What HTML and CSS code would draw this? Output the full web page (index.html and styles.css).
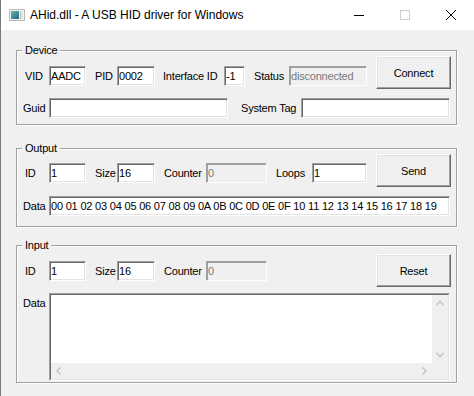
FILE: index.html
```html
<!DOCTYPE html>
<html lang="en">
<head>
    <meta charset="UTF-8">
    <title>AHid.dll - A USB HID driver for Windows</title>
    <link rel="stylesheet" href="styles.css">
</head>
<body>
    <div class="window">
        <div class="titlebar">
            <svg class="app-icon" width="16" height="12" viewBox="0 0 16 12">
                <defs>
                    <linearGradient id="scr" x1="0" y1="0" x2="1" y2="1">
                        <stop offset="0" stop-color="#6fb98f"/>
                        <stop offset="0.5" stop-color="#3f8f9a"/>
                        <stop offset="1" stop-color="#2c5f8f"/>
                    </linearGradient>
                </defs>
                <rect x="0.5" y="0.5" width="15" height="11" fill="#f4f4f4" stroke="#b8b8b8"/>
                <rect x="2" y="2" width="8" height="8" fill="url(#scr)"/>
                <rect x="11" y="2" width="3" height="8" fill="#e2e2e2"/>
                <rect x="11" y="2" width="1" height="8" fill="#c4c4c4"/>
            </svg>
            <span class="title">AHid.dll - A USB HID driver for Windows</span>
            <div class="caption-btns">
                <span class="cap-btn">
                    <svg width="10" height="10" viewBox="0 0 10 10"><path d="M0 5.5h10" stroke="#000" stroke-width="1"/></svg>
                </span>
                <span class="cap-btn">
                    <svg width="10" height="10" viewBox="0 0 10 10"><rect x="0.5" y="0.5" width="9" height="9" fill="none" stroke="#cccccc"/></svg>
                </span>
                <span class="cap-btn">
                    <svg width="10" height="10" viewBox="0 0 10 10"><path d="M0 0L10 10M10 0L0 10" stroke="#000" stroke-width="1"/></svg>
                </span>
            </div>
        </div>

        <div class="client">
            <!-- Device -->
            <div class="group group-device">
                <div class="group-title">Device</div>
                <div class="row row-top">
                    <label class="lbl lbl-first w-26">VID</label>
                    <input class="edit w-37" type="text" value="AADC">
                    <label class="lbl w-31">PID</label>
                    <input class="edit w-38" type="text" value="0002">
                    <label class="lbl lbl-8 w-69">Interface ID</label>
                    <input class="edit w-21" type="text" value="-1">
                    <label class="lbl w-44">Status</label>
                    <input class="edit w-78" type="text" value="disconnected" disabled>
                    <button class="btn">Connect</button>
                </div>
                <div class="row row-second">
                    <label class="lbl lbl-zero w-26">Guid</label>
                    <input class="edit w-179" type="text" value="">
                    <label class="lbl lbl-13 w-73">System Tag</label>
                    <input class="edit w-149" type="text" value="">
                </div>
            </div>

            <!-- Output -->
            <div class="group group-output">
                <div class="group-title">Output</div>
                <div class="row row-top">
                    <label class="lbl lbl-first w-26">ID</label>
                    <input class="edit w-37" type="text" value="1">
                    <label class="lbl w-31">Size</label>
                    <input class="edit w-38" type="text" value="16">
                    <label class="lbl w-51">Counter</label>
                    <input class="edit w-61" type="text" value="0" disabled>
                    <label class="lbl w-45">Loops</label>
                    <input class="edit w-55" type="text" value="1">
                    <button class="btn">Send</button>
                </div>
                <div class="row row-second">
                    <label class="lbl lbl-zero w-26">Data</label>
                    <input class="edit w-401" type="text" value="00 01 02 03 04 05 06 07 08 09 0A 0B 0C 0D 0E 0F 10 11 12 13 14 15 16 17 18 19">
                </div>
            </div>

            <!-- Input -->
            <div class="group group-input">
                <div class="group-title">Input</div>
                <div class="row row-top">
                    <label class="lbl lbl-first w-26">ID</label>
                    <input class="edit w-37" type="text" value="1">
                    <label class="lbl w-31">Size</label>
                    <input class="edit w-38" type="text" value="16">
                    <label class="lbl w-51">Counter</label>
                    <input class="edit w-61" type="text" value="0" disabled>
                    <button class="btn">Reset</button>
                </div>
                <div class="row row-second">
                    <label class="lbl lbl-zero w-26">Data</label>
                    <div class="memo">
                        <div class="memo-inner">
                            <textarea class="memo-text"></textarea>
                            <div class="vbar">
                                <svg width="16" height="16" viewBox="0 0 16 16"><path d="M4.5 10L8 6.5L11.5 10" fill="none" stroke="#c2c2c2" stroke-width="1.4"/></svg>
                                <svg width="16" height="16" viewBox="0 0 16 16"><path d="M4.5 6L8 9.5L11.5 6" fill="none" stroke="#c2c2c2" stroke-width="1.4"/></svg>
                            </div>
                            <div class="hbar">
                                <svg width="16" height="16" viewBox="0 0 16 16"><path d="M9.5 4.5L6 8L9.5 11.5" fill="none" stroke="#c2c2c2" stroke-width="1.4"/></svg>
                                <svg width="16" height="16" viewBox="0 0 16 16"><path d="M6.5 4.5L10 8L6.5 11.5" fill="none" stroke="#c2c2c2" stroke-width="1.4"/></svg>
                            </div>
                            <div class="corner"></div>
                        </div>
                    </div>
                </div>
            </div>
        </div>
    </div>
</body>
</html>
```

FILE: styles.css
```css
body {
    margin: 0;
    background: #f0f0f0;
    font-family: "Liberation Sans", Arial, sans-serif;
    font-size: 11px;
    letter-spacing: -0.2px;
    color: #000;
}
.window {
    width: 474px;
    height: 396px;
    box-sizing: border-box;
    border-left: 1px solid #7a7a7a;
    background: #f0f0f0;
    overflow: hidden;
}

/* title bar */
.titlebar {
    height: 30px;
    background: #fff;
    display: flex;
    align-items: center;
    letter-spacing: 0;
}
.app-icon {
    margin-left: 8px;
    margin-top: -1px;
}
.title {
    margin-left: 5px;
    font-size: 12px;
}
.caption-btns {
    margin-left: auto;
    display: flex;
}
.cap-btn {
    width: 46px;
    height: 30px;
    display: flex;
    align-items: center;
    justify-content: center;
}

/* client area */
.client {
    padding: 20px 0 0 15px;
}
.group {
    box-sizing: border-box;
    width: 441px;
    border: 1px solid #a0a0a0;
    box-shadow: 1px 1px 0 #fff, inset 1px 1px 0 #fff;
    padding: 0 5px 0 6px;
}
.group-title {
    display: table;
    margin: -7px 0 -6px -1px;
    padding: 0 3px;
    line-height: 13px;
    background: #f0f0f0;
}
.group-device {
    height: 75px;
    --pad-top: 5px;
    --field-top: 10px;
    --second-top: 9px;
}
.group-output {
    height: 79px;
    margin-top: 23px;
    --pad-top: 5px;
    --field-top: 9px;
    --second-top: 9px;
}
.group-input {
    height: 138px;
    margin-top: 18px;
    --pad-top: 8px;
    --field-top: 7px;
    --second-top: 6px;
}

.row {
    display: flex;
    align-items: flex-start;
}
.row-top {
    padding-top: var(--pad-top);
}
.row-top > .lbl,
.row-top > .edit {
    margin-top: var(--field-top);
}
.row-second {
    margin-top: var(--second-top);
}

.lbl {
    box-sizing: border-box;
    line-height: 20px;
    padding-left: 9px;
    white-space: nowrap;
    flex: none;
}
.lbl-first { padding-left: 2px; }
.lbl-zero { padding-left: 0; }
.lbl-8 { padding-left: 8px; }
.lbl-13 { padding-left: 13px; }

.edit {
    box-sizing: border-box;
    height: 20px;
    margin: 0;
    padding: 0 0 0 1px;
    border: 1px solid;
    border-color: #a0a0a0 #fff #fff #a0a0a0;
    box-shadow: inset 1px 1px 0 #696969, inset -1px -1px 0 #e3e3e3;
    background: #fff;
    font-family: "Liberation Sans", Arial, sans-serif;
    font-size: 11px;
    letter-spacing: -0.2px;
    color: #000;
    outline: none;
    flex: none;
}
.edit:disabled {
    background: #f0f0f0;
    color: #7a7a7a;
    box-shadow: inset 1px 1px 0 #a0a0a0, inset -1px -1px 0 #f0f0f0;
}

.btn {
    box-sizing: border-box;
    width: 75px;
    height: 33px;
    margin: 0 0 0 auto;
    padding: 0;
    border: 1px solid;
    border-color: #fff #696969 #696969 #fff;
    box-shadow: inset -1px -1px 0 #a0a0a0, inset 1px 1px 0 #e3e3e3;
    background: #f0f0f0;
    font-family: "Liberation Sans", Arial, sans-serif;
    font-size: 11px;
    letter-spacing: -0.2px;
    color: #000;
    flex: none;
}

/* widths */
.w-21 { width: 21px; }
.w-26 { width: 26px; }
.w-31 { width: 31px; }
.w-37 { width: 37px; }
.w-38 { width: 38px; }
.w-44 { width: 44px; }
.w-45 { width: 45px; }
.w-51 { width: 51px; }
.w-55 { width: 55px; }
.w-61 { width: 61px; }
.w-69 { width: 69px; }
.w-73 { width: 73px; }
.w-78 { width: 78px; }
.w-149 { width: 149px; }
.w-179 { width: 179px; }
.w-401 { width: 401px; }

/* multi-line data box */
.memo {
    box-sizing: border-box;
    width: 401px;
    height: 88px;
    border: 1px solid;
    border-color: #a0a0a0 #fff #fff #a0a0a0;
    flex: none;
}
.memo-inner {
    box-sizing: border-box;
    height: 100%;
    border: 1px solid;
    border-color: #696969 #e3e3e3 #e3e3e3 #696969;
    display: grid;
    grid-template-columns: 1fr 16px;
    grid-template-rows: 1fr 16px;
}
.memo-text {
    border: none;
    margin: 0;
    padding: 0;
    resize: none;
    outline: none;
    background: #fff;
    font-family: "Liberation Sans", Arial, sans-serif;
    font-size: 11px;
}
.vbar {
    background: #f0f0f0;
    display: flex;
    flex-direction: column;
    justify-content: space-between;
}
.hbar {
    background: #f0f0f0;
    display: flex;
    justify-content: space-between;
}
.corner {
    background: #f0f0f0;
}
```
